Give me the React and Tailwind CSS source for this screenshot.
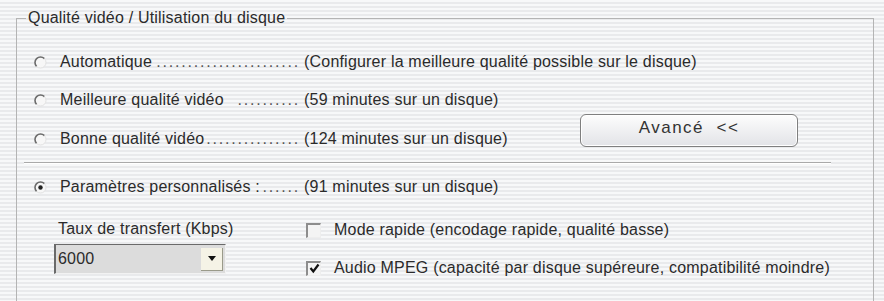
import React from 'react'

const Radio = ({ checked }) => (
  <svg width="13" height="13" viewBox="0 0 13 13" className="shrink-0">
    <circle cx="6.5" cy="6.5" r="5.5" fill="#f7f7f7" />
    <path d="M10.4 2.6 A5.5 5.5 0 0 0 2.6 10.4" fill="none" stroke="#6b6b6b" strokeWidth="1.6" />
    <path d="M2.6 10.4 A5.5 5.5 0 0 0 10.4 2.6" fill="none" stroke="#e2e2e2" strokeWidth="1" />
    {checked && <circle cx="6.5" cy="6.5" r="2.2" fill="#222" />}
  </svg>
)

const Check = ({ checked }) => (
  <div className="w-[15px] h-[15px] shrink-0 border-t-2 border-l-2 border-[#8d8d8d] border-r border-b border-r-[#eee] border-b-[#eee] bg-[#f4f4f4] flex items-center justify-center">
    {checked && (
      <svg width="11" height="11" viewBox="0 0 11 11">
        <path d="M1.5 5 L4.3 8.5 L9.5 1.5" fill="none" stroke="#111" strokeWidth="2.2" />
      </svg>
    )}
  </div>
)

const Row = ({ label, dots, desc, checked, tall }) => (
  <div className={`flex items-center ${tall ? 'h-[40px]' : 'h-[38px]'}`}>
    <Radio checked={checked} />
    <div className="flex justify-between w-[253px] pl-[13px] whitespace-pre">
      <span>{label}</span>
      <span className="tracking-[1.8px] text-[#555]">{'.'.repeat(dots)}</span>
    </div>
    <span className="pl-[4px] whitespace-nowrap">{desc}</span>
  </div>
)

const App = () => {
  return (
    <div className="w-[884px] h-[301px] overflow-hidden pt-[10px] pl-[16px] text-[16px] tracking-[0.2px] text-[#2b2b2b] bg-[repeating-linear-gradient(to_bottom,#f7f8f9_0px,#f7f8f9_2px,#e9eaec_2px,#e9eaec_4px)]" style={{ fontFamily: '"Liberation Sans", Arial, sans-serif' }}>
      <fieldset className="w-[858px] h-[300px] border border-[#b4b4b4]">
        <legend className="ml-[9px] px-[2px] leading-[16px]">Qualité vidéo / Utilisation du disque</legend>

        <div className="pl-[17px] pt-[17px]">
          <Row label="Automatique" dots={23} desc="(Configurer la meilleure qualité possible sur le disque)" />

          <div className="flex items-end">
            <div className="flex flex-col">
              <Row label="Meilleure qualité vidéo" dots={10} desc="(59 minutes sur un disque)" />
              <Row label="Bonne qualité vidéo" dots={15} desc="(124 minutes sur un disque)" tall />
            </div>
            <button className="ml-auto mr-[75px] mb-[12px] w-[218px] h-[33px] rounded-[6px] border border-[#7f7f7f] bg-[linear-gradient(to_bottom,#fdfdfd,#e2e3e7)] shadow-[inset_0_0_0_1px_#fff] text-[17px] tracking-[1.5px] text-[#333] pb-[6px] whitespace-pre">
              Avancé  &lt;&lt;
            </button>
          </div>

          <div className="mt-[3px] mr-[42px] -ml-[10px] border-t border-[#a9a9a9] border-b border-b-white" />

          <div className="mt-[4px]">
            <Row label="Paramètres personnalisés :" dots={6} desc="(91 minutes sur un disque)" checked />
          </div>

          <div className="flex mt-[15px]">
            <div className="w-[272px] pl-[20px] flex flex-col">
              <span className="pl-[4px] leading-[16px]">Taux de transfert (Kbps)</span>
              <div className="mt-[7px] w-[172px] h-[30px] flex items-center bg-[#dcdcdc] border-l-2 border-t border-[#6a6a6a] border-r border-b border-r-[#f2f2f2] border-b-[#f2f2f2] pl-[2px] pr-[2px]">
                <span className="flex-1">6000</span>
                <div className="w-[22px] h-[23px] bg-[#f5f3e6] border-r border-b border-[#9a9a8a] flex items-center justify-center">
                  <svg width="8" height="5" viewBox="0 0 8 5"><path d="M0 0 H8 L4 5 Z" fill="#111" /></svg>
                </div>
              </div>
            </div>
            <div className="flex flex-col gap-[22px] pt-[1px]">
              <div className="flex items-center gap-[13px] h-[16px]">
                <Check />
                <span>Mode rapide (encodage rapide, qualité basse)</span>
              </div>
              <div className="flex items-center gap-[13px] h-[16px]">
                <Check checked />
                <span>Audio MPEG (capacité par disque supéreure, compatibilité moindre)</span>
              </div>
            </div>
          </div>
        </div>
      </fieldset>
    </div>
  )
}

export default App
